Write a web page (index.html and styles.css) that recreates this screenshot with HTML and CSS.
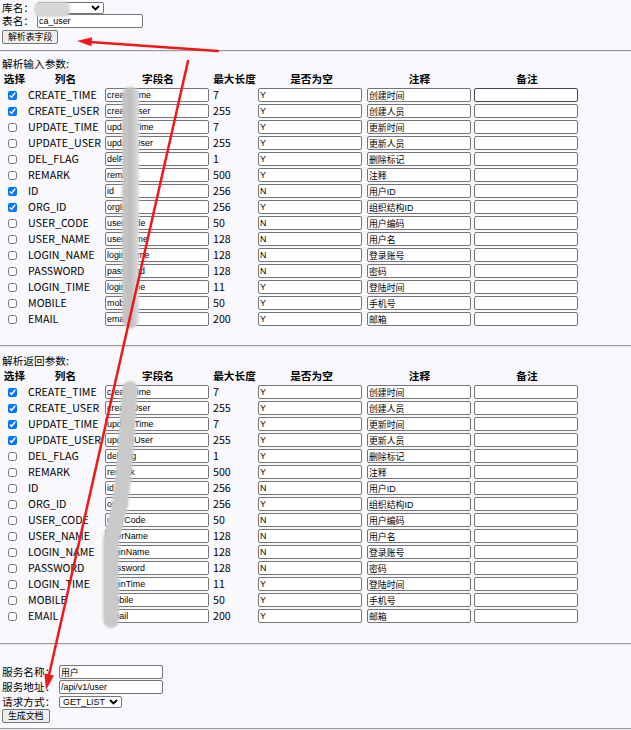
FILE: index.html
```html
<!DOCTYPE html>
<html lang="zh-CN">
<head>
<meta charset="utf-8">
<title>表字段解析</title>
<link rel="stylesheet" href="styles.css">
</head>
<body>
<main class="page">
  <section class="top-form">
    <div class="form-line line-db">
      <span class="lbl lbl-short">库名：</span>
      <div class="select-box sel-db">
        <select class="native-select"><option></option></select>
        <svg class="chev" width="9" height="6" viewBox="0 0 9 6"><path d="M1 1 L4.5 4.5 L8 1" fill="none" stroke="#000" stroke-width="1.8"/></svg>
      </div>
    </div>
    <div class="form-line line-input">
      <span class="lbl lbl-short">表名：</span>
      <input class="txt-input" value="ca_user">
    </div>
    <button class="btn btn-parse">解析表字段</button>
  </section>

  <hr class="rule rule-1">

  <section class="param-block block-in">
    <div class="caption">解析输入参数:</div>
    <table class="ptable">
      <colgroup><col class="w-sel"><col class="w-col"><col class="w-field"><col class="w-len"><col class="w-null"><col class="w-note"><col class="w-rem"></colgroup>
      <thead><tr><th>选择</th><th>列名</th><th>字段名</th><th>最大长度</th><th>是否为空</th><th>注释</th><th>备注</th></tr></thead>
      <tbody>
        <tr><td><input class="chk" type="checkbox" checked></td><td class="c-col">CREATE_TIME</td><td><input class="cell-input" value="createTime"></td><td class="c-len">7</td><td><input class="cell-input" value="Y"></td><td><input class="cell-input" value="创建时间"></td><td><input class="cell-input cell-hover"></td></tr>
        <tr><td><input class="chk" type="checkbox" checked></td><td class="c-col">CREATE_USER</td><td><input class="cell-input" value="createUser"></td><td class="c-len">255</td><td><input class="cell-input" value="Y"></td><td><input class="cell-input" value="创建人员"></td><td><input class="cell-input"></td></tr>
        <tr><td><input class="chk" type="checkbox"></td><td class="c-col">UPDATE_TIME</td><td><input class="cell-input" value="updateTime"></td><td class="c-len">7</td><td><input class="cell-input" value="Y"></td><td><input class="cell-input" value="更新时间"></td><td><input class="cell-input"></td></tr>
        <tr><td><input class="chk" type="checkbox"></td><td class="c-col">UPDATE_USER</td><td><input class="cell-input" value="updateUser"></td><td class="c-len">255</td><td><input class="cell-input" value="Y"></td><td><input class="cell-input" value="更新人员"></td><td><input class="cell-input"></td></tr>
        <tr><td><input class="chk" type="checkbox"></td><td class="c-col">DEL_FLAG</td><td><input class="cell-input" value="delFlag"></td><td class="c-len">1</td><td><input class="cell-input" value="Y"></td><td><input class="cell-input" value="删除标记"></td><td><input class="cell-input"></td></tr>
        <tr><td><input class="chk" type="checkbox"></td><td class="c-col">REMARK</td><td><input class="cell-input" value="remark"></td><td class="c-len">500</td><td><input class="cell-input" value="Y"></td><td><input class="cell-input" value="注释"></td><td><input class="cell-input"></td></tr>
        <tr><td><input class="chk" type="checkbox" checked></td><td class="c-col">ID</td><td><input class="cell-input" value="id"></td><td class="c-len">256</td><td><input class="cell-input" value="N"></td><td><input class="cell-input" value="用户ID"></td><td><input class="cell-input"></td></tr>
        <tr><td><input class="chk" type="checkbox" checked></td><td class="c-col">ORG_ID</td><td><input class="cell-input" value="orgId"></td><td class="c-len">256</td><td><input class="cell-input" value="Y"></td><td><input class="cell-input" value="组织结构ID"></td><td><input class="cell-input"></td></tr>
        <tr><td><input class="chk" type="checkbox"></td><td class="c-col">USER_CODE</td><td><input class="cell-input" value="userCode"></td><td class="c-len">50</td><td><input class="cell-input" value="N"></td><td><input class="cell-input" value="用户编码"></td><td><input class="cell-input"></td></tr>
        <tr><td><input class="chk" type="checkbox"></td><td class="c-col">USER_NAME</td><td><input class="cell-input" value="userName"></td><td class="c-len">128</td><td><input class="cell-input" value="N"></td><td><input class="cell-input" value="用户名"></td><td><input class="cell-input"></td></tr>
        <tr><td><input class="chk" type="checkbox"></td><td class="c-col">LOGIN_NAME</td><td><input class="cell-input" value="loginName"></td><td class="c-len">128</td><td><input class="cell-input" value="N"></td><td><input class="cell-input" value="登录账号"></td><td><input class="cell-input"></td></tr>
        <tr><td><input class="chk" type="checkbox"></td><td class="c-col">PASSWORD</td><td><input class="cell-input" value="password"></td><td class="c-len">128</td><td><input class="cell-input" value="N"></td><td><input class="cell-input" value="密码"></td><td><input class="cell-input"></td></tr>
        <tr><td><input class="chk" type="checkbox"></td><td class="c-col">LOGIN_TIME</td><td><input class="cell-input" value="loginTime"></td><td class="c-len">11</td><td><input class="cell-input" value="Y"></td><td><input class="cell-input" value="登陆时间"></td><td><input class="cell-input"></td></tr>
        <tr><td><input class="chk" type="checkbox"></td><td class="c-col">MOBILE</td><td><input class="cell-input" value="mobile"></td><td class="c-len">50</td><td><input class="cell-input" value="Y"></td><td><input class="cell-input" value="手机号"></td><td><input class="cell-input"></td></tr>
        <tr><td><input class="chk" type="checkbox"></td><td class="c-col">EMAIL</td><td><input class="cell-input" value="email"></td><td class="c-len">200</td><td><input class="cell-input" value="Y"></td><td><input class="cell-input" value="邮箱"></td><td><input class="cell-input"></td></tr>
      </tbody>
    </table>
  </section>

  <hr class="rule rule-2">

  <section class="param-block block-out">
    <div class="caption">解析返回参数:</div>
    <table class="ptable">
      <colgroup><col class="w-sel"><col class="w-col"><col class="w-field"><col class="w-len"><col class="w-null"><col class="w-note"><col class="w-rem"></colgroup>
      <thead><tr><th>选择</th><th>列名</th><th>字段名</th><th>最大长度</th><th>是否为空</th><th>注释</th><th>备注</th></tr></thead>
      <tbody>
        <tr><td><input class="chk" type="checkbox" checked></td><td class="c-col">CREATE_TIME</td><td><input class="cell-input" value="createTime"></td><td class="c-len">7</td><td><input class="cell-input" value="Y"></td><td><input class="cell-input" value="创建时间"></td><td><input class="cell-input"></td></tr>
        <tr><td><input class="chk" type="checkbox" checked></td><td class="c-col">CREATE_USER</td><td><input class="cell-input" value="createUser"></td><td class="c-len">255</td><td><input class="cell-input" value="Y"></td><td><input class="cell-input" value="创建人员"></td><td><input class="cell-input"></td></tr>
        <tr><td><input class="chk" type="checkbox" checked></td><td class="c-col">UPDATE_TIME</td><td><input class="cell-input" value="updateTime"></td><td class="c-len">7</td><td><input class="cell-input" value="Y"></td><td><input class="cell-input" value="更新时间"></td><td><input class="cell-input"></td></tr>
        <tr><td><input class="chk" type="checkbox" checked></td><td class="c-col">UPDATE_USER</td><td><input class="cell-input" value="updateUser"></td><td class="c-len">255</td><td><input class="cell-input" value="Y"></td><td><input class="cell-input" value="更新人员"></td><td><input class="cell-input"></td></tr>
        <tr><td><input class="chk" type="checkbox"></td><td class="c-col">DEL_FLAG</td><td><input class="cell-input" value="delFlag"></td><td class="c-len">1</td><td><input class="cell-input" value="Y"></td><td><input class="cell-input" value="删除标记"></td><td><input class="cell-input"></td></tr>
        <tr><td><input class="chk" type="checkbox"></td><td class="c-col">REMARK</td><td><input class="cell-input" value="remark"></td><td class="c-len">500</td><td><input class="cell-input" value="Y"></td><td><input class="cell-input" value="注释"></td><td><input class="cell-input"></td></tr>
        <tr><td><input class="chk" type="checkbox"></td><td class="c-col">ID</td><td><input class="cell-input" value="id"></td><td class="c-len">256</td><td><input class="cell-input" value="N"></td><td><input class="cell-input" value="用户ID"></td><td><input class="cell-input"></td></tr>
        <tr><td><input class="chk" type="checkbox"></td><td class="c-col">ORG_ID</td><td><input class="cell-input" value="orgId"></td><td class="c-len">256</td><td><input class="cell-input" value="Y"></td><td><input class="cell-input" value="组织结构ID"></td><td><input class="cell-input"></td></tr>
        <tr><td><input class="chk" type="checkbox"></td><td class="c-col">USER_CODE</td><td><input class="cell-input" value="userCode"></td><td class="c-len">50</td><td><input class="cell-input" value="N"></td><td><input class="cell-input" value="用户编码"></td><td><input class="cell-input"></td></tr>
        <tr><td><input class="chk" type="checkbox"></td><td class="c-col">USER_NAME</td><td><input class="cell-input" value="userName"></td><td class="c-len">128</td><td><input class="cell-input" value="N"></td><td><input class="cell-input" value="用户名"></td><td><input class="cell-input"></td></tr>
        <tr><td><input class="chk" type="checkbox"></td><td class="c-col">LOGIN_NAME</td><td><input class="cell-input" value="loginName"></td><td class="c-len">128</td><td><input class="cell-input" value="N"></td><td><input class="cell-input" value="登录账号"></td><td><input class="cell-input"></td></tr>
        <tr><td><input class="chk" type="checkbox"></td><td class="c-col">PASSWORD</td><td><input class="cell-input" value="password"></td><td class="c-len">128</td><td><input class="cell-input" value="N"></td><td><input class="cell-input" value="密码"></td><td><input class="cell-input"></td></tr>
        <tr><td><input class="chk" type="checkbox"></td><td class="c-col">LOGIN_TIME</td><td><input class="cell-input" value="loginTime"></td><td class="c-len">11</td><td><input class="cell-input" value="Y"></td><td><input class="cell-input" value="登陆时间"></td><td><input class="cell-input"></td></tr>
        <tr><td><input class="chk" type="checkbox"></td><td class="c-col">MOBILE</td><td><input class="cell-input" value="mobile"></td><td class="c-len">50</td><td><input class="cell-input" value="Y"></td><td><input class="cell-input" value="手机号"></td><td><input class="cell-input"></td></tr>
        <tr><td><input class="chk" type="checkbox"></td><td class="c-col">EMAIL</td><td><input class="cell-input" value="email"></td><td class="c-len">200</td><td><input class="cell-input" value="Y"></td><td><input class="cell-input" value="邮箱"></td><td><input class="cell-input"></td></tr>
      </tbody>
    </table>
  </section>

  <hr class="rule rule-3">

  <section class="service-form">
    <div class="form-line line-input">
      <span class="lbl lbl-long">服务名称：</span>
      <input class="txt-input" value="用户">
    </div>
    <div class="form-line line-input line-gap1">
      <span class="lbl lbl-long">服务地址：</span>
      <input class="txt-input" value="/api/v1/user">
    </div>
    <div class="form-line line-select">
      <span class="lbl lbl-long">请求方式：</span>
      <div class="select-box sel-method">
        <select class="native-select"><option>GET_LIST</option></select>
        <svg class="chev" width="9" height="6" viewBox="0 0 9 6"><path d="M1 1 L4.5 4.5 L8 1" fill="none" stroke="#000" stroke-width="1.8"/></svg>
      </div>
    </div>
    <button class="btn btn-doc">生成文档</button>
  </section>

  <hr class="rule rule-4">
</main>

<svg class="marks" width="631" height="730" viewBox="0 0 631 730" aria-hidden="true">
  <defs>
    <filter id="soft" x="-50%" y="-20%" width="200%" height="140%"><feGaussianBlur stdDeviation="1.2"/></filter>
    <linearGradient id="mosaic" x1="0" x2="1" y1="0" y2="0">
      <stop offset="0" stop-color="#c8c8c8"/>
      <stop offset="0.5" stop-color="#bebebe"/>
      <stop offset="1" stop-color="#dedede"/>
    </linearGradient>
  </defs>
  <rect x="34" y="2" width="36" height="15" rx="6" fill="#d6d6d6" filter="url(#soft)"/>
  <rect x="122" y="87" width="17" height="241" rx="8" fill="url(#mosaic)" filter="url(#soft)"/>
  <path d="M130 389 L124 470 L120 505 L111 540 L111 620" fill="none" stroke="#c9c9c9" stroke-width="16" stroke-linecap="round" stroke-linejoin="round" filter="url(#soft)"/>
  <line x1="218" y1="51" x2="90" y2="42" stroke="#f01818" stroke-width="2.5" stroke-linecap="round"/>
  <polygon points="77,41 92,37.2 91.4,46.2" fill="#f01818"/>
  <line x1="188" y1="61" x2="49" y2="675" stroke="#f01818" stroke-width="2.5" stroke-linecap="round"/>
  <polygon points="46,690 44.4,673.4 54,675.6" fill="#f01818"/>
</svg>
</body>
</html>
```

FILE: styles.css
```css
html, body {
  margin: 0;
  padding: 0;
}

body {
  position: relative;
  width: 631px;
  min-height: 730px;
  overflow: hidden;
  background: #f9f9fd;
  color: #000;
  font-family: "Noto Sans CJK SC", "Microsoft YaHei", sans-serif;
  font-size: 10.67px;
  line-height: 15px;
}

.page {
  display: flex;
  flex-direction: column;
}

/* ---------- forms ---------- */
.top-form,
.service-form {
  display: flex;
  flex-direction: column;
  align-items: flex-start;
  padding: 0 2px;
}

.top-form {
  padding-top: 2px;
}

.service-form {
  margin-top: 20px;
}

.form-line {
  display: flex;
  align-items: center;
}

.line-db { height: 12px; }
.line-input { height: 14px; }
.line-gap1 { margin-top: 1px; }
.line-select { height: 12px; margin-top: 2px; }

.lbl {
  flex: none;
  white-space: nowrap;
  line-height: 12px;
}
.lbl-short { width: 35px; }
.lbl-long { width: 57px; }

.txt-input,
.cell-input {
  box-sizing: border-box;
  height: 14px;
  width: 104px;
  margin: 0;
  padding: 0 1px;
  border: 1px solid #767676;
  border-radius: 2px;
  background: #fff;
  color: #000;
  font-family: "Liberation Sans", Arial, "Noto Sans CJK SC", sans-serif;
  font-size: 8.89px;
  line-height: 12px;
  outline: none;
}

.txt-input { width: 106px; }
.service-form .txt-input { width: 104px; }

.select-box {
  position: relative;
  height: 12px;
}

.native-select {
  -webkit-appearance: none;
  appearance: none;
  box-sizing: border-box;
  display: block;
  height: 12px;
  margin: 0;
  padding: 0 0 0 3px;
  border: 1px solid #767676;
  border-radius: 2px;
  background: #fff;
  color: #000;
  font-family: "Liberation Sans", Arial, sans-serif;
  font-size: 8.89px;
  line-height: 10px;
}

.sel-db .native-select { width: 67px; }
.sel-method .native-select { width: 63px; }

.chev {
  position: absolute;
  right: 4px;
  top: 3px;
}

.btn {
  box-sizing: border-box;
  height: 14px;
  margin: 2px 0 0;
  padding: 0 5px;
  border: 1px solid #767676;
  border-radius: 2px;
  background: #efefef;
  color: #000;
  font-family: "Noto Sans CJK SC", "Microsoft YaHei", sans-serif;
  font-size: 8.89px;
  line-height: 12px;
}

.btn-doc { margin-top: 1px; }

/* ---------- rules ---------- */
.rule {
  box-sizing: border-box;
  width: 100%;
  height: 2px;
  margin: 0;
  border: 0;
  border-top: 1px solid #9b9b9b;
  border-bottom: 1px solid #e6e6e6;
}
.rule-1 { margin-top: 6px; }
.rule-2 { margin-top: 18px; }
.rule-3 { margin-top: 19px; }
.rule-4 { margin-top: 5px; }

/* ---------- parameter tables ---------- */
.param-block {
  padding: 0 2px;
}
.block-in { margin-top: 4px; }
.block-out { margin-top: 6px; }

.caption {
  height: 15px;
  line-height: 15px;
  white-space: nowrap;
}

.ptable {
  border-collapse: collapse;
  border-spacing: 0;
  table-layout: fixed;
  width: 579px;
}

.w-sel { width: 25px; }
.w-col { width: 77px; }
.w-field { width: 108px; }
.w-len { width: 45px; }
.w-null { width: 109px; }
.w-note { width: 107px; }
.w-rem { width: 108px; }

.ptable th {
  height: 16px;
  padding: 0;
  font-weight: bold;
  text-align: center;
  white-space: nowrap;
  line-height: 16px;
}

.ptable td {
  height: 16px;
  padding: 0;
  vertical-align: middle;
  white-space: nowrap;
  overflow: visible;
  line-height: 16px;
}

.c-col,
.c-len {
  padding-left: 1px !important;
}

.cell-input {
  display: block;
  margin-left: 1px;
}

.cell-hover {
  border-color: #4a4a4a;
}

.chk {
  display: block;
  width: 9px;
  height: 9px;
  margin: 0 0 0 6px;
  accent-color: #0075ff;
}

/* ---------- annotation overlay ---------- */
.marks {
  position: absolute;
  left: 0;
  top: 0;
  pointer-events: none;
}
```
